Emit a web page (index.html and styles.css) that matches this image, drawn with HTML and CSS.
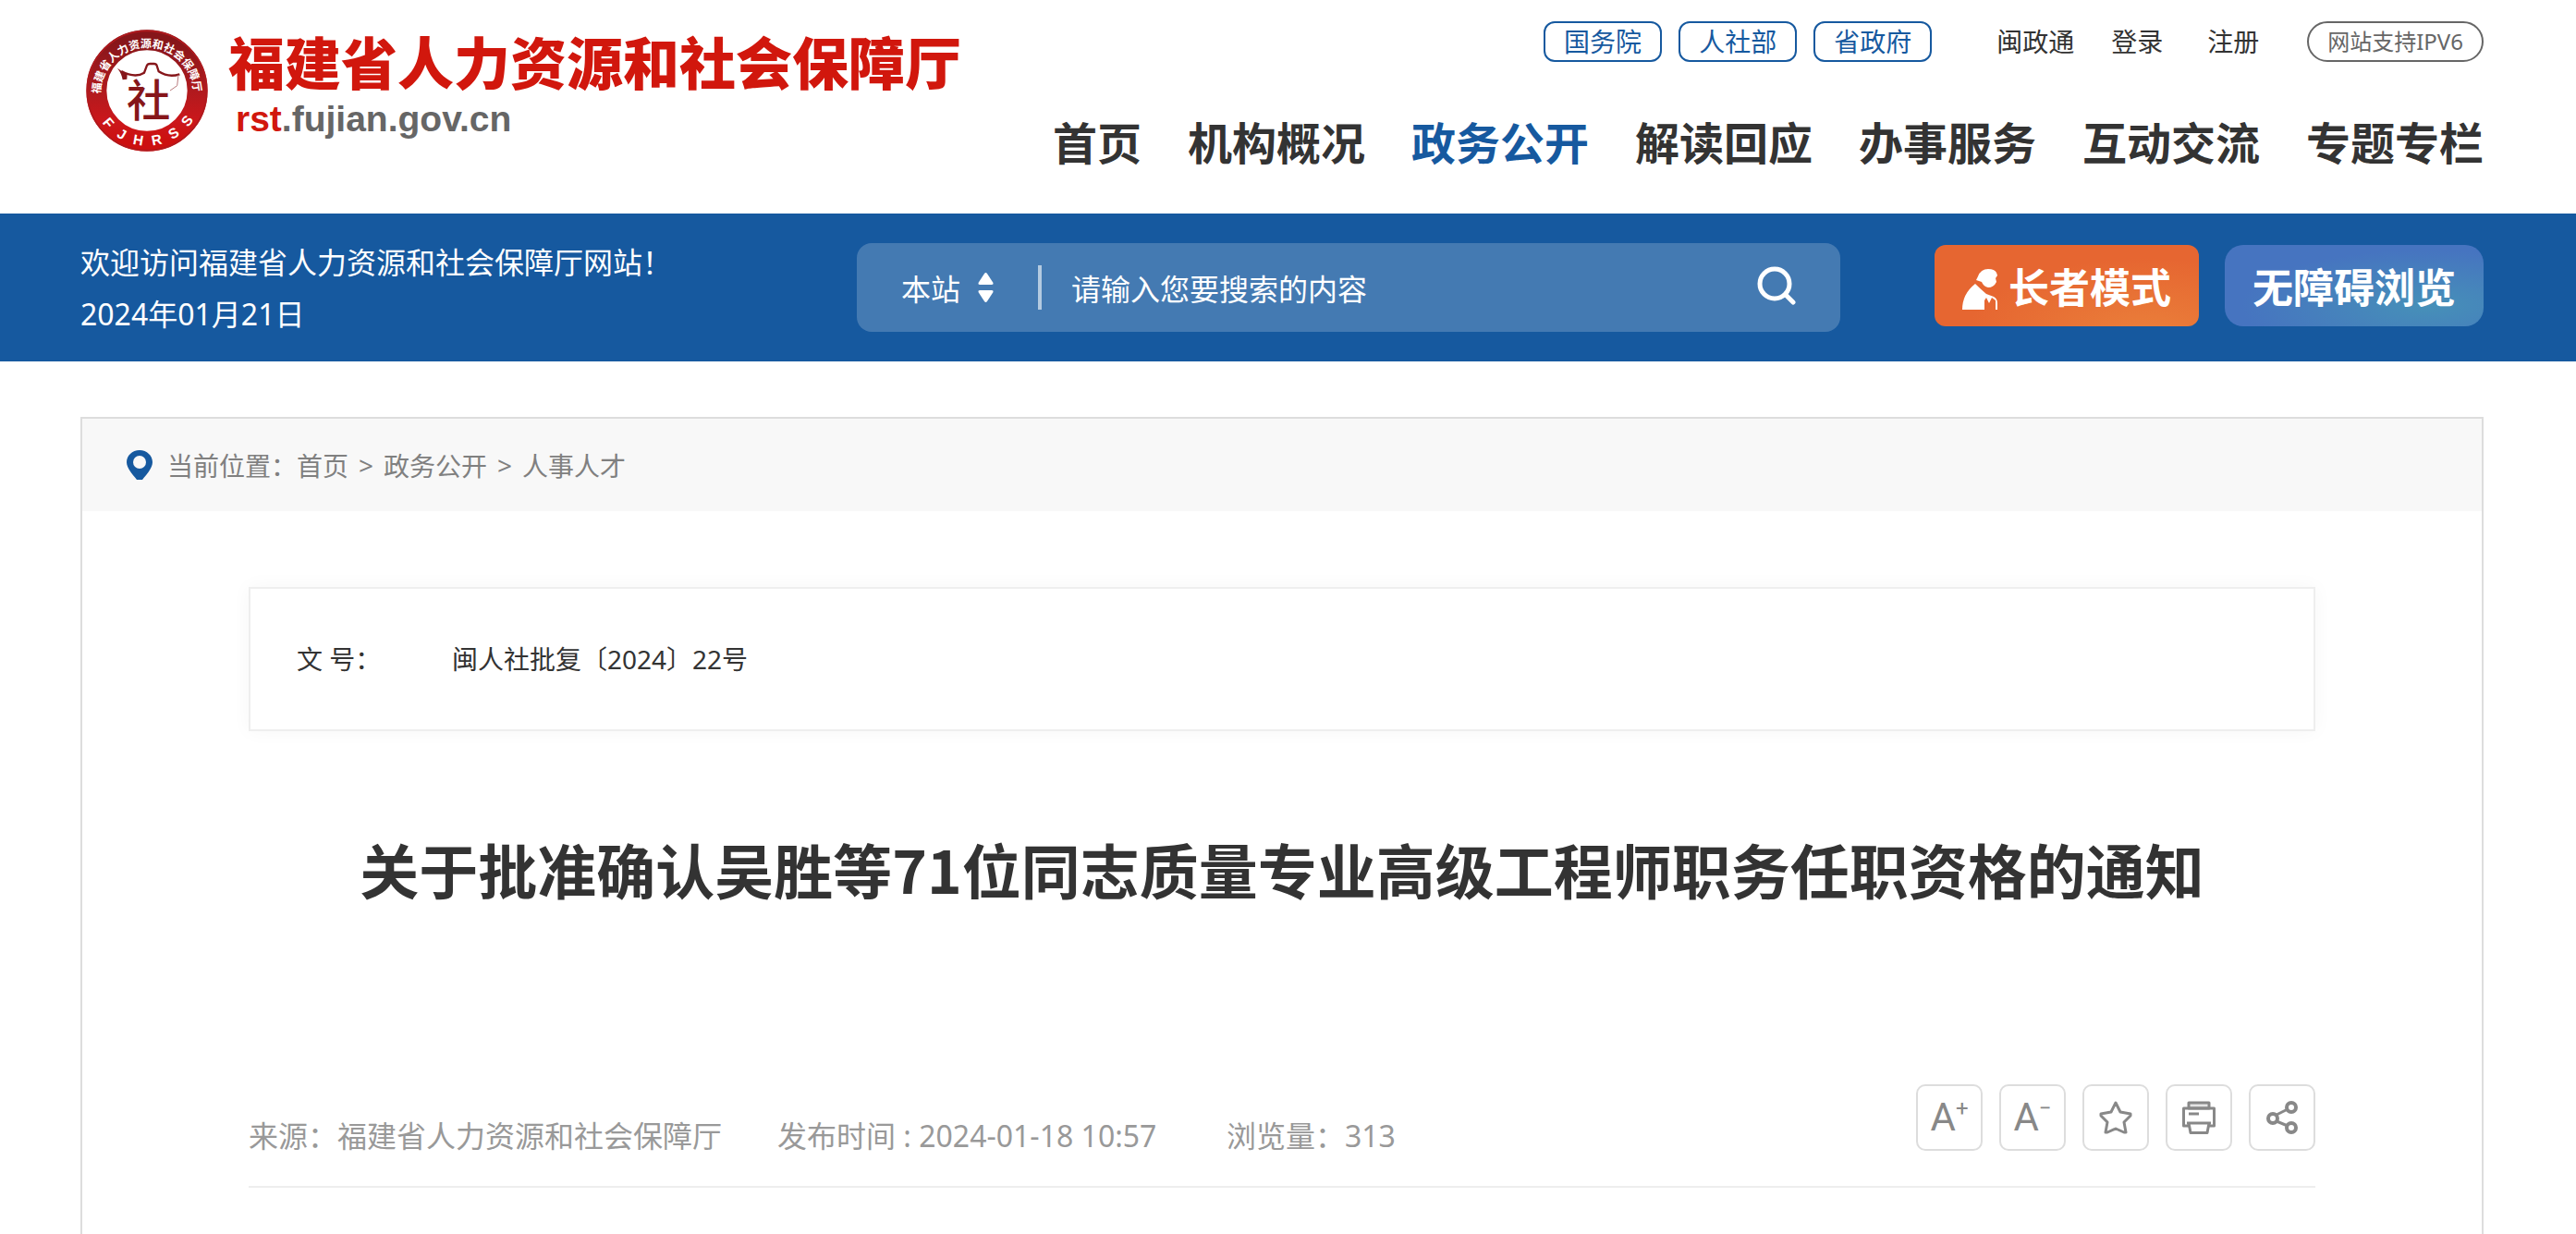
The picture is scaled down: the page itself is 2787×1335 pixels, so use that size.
FILE: index.html
```html
<!DOCTYPE html>
<html lang="zh-CN">

<head>
    <meta charset="UTF-8">
    <meta name="viewport" content="width=device-width, initial-scale=1.0">
    <title>福建省人力资源和社会保障厅</title>
    <link rel="stylesheet" href="styles.css">
</head>

<body>
    <header class="header wrap">
        <a class="logo" href="#">
            <svg class="emblem" viewBox="70 65 396 396" role="img" aria-label="FJHRSS">
                <defs>
                    <linearGradient id="ring" x1="0" y1="0" x2="0" y2="1">
                        <stop offset="0" stop-color="#86161a" />
                        <stop offset="0.5" stop-color="#b01a1e" />
                        <stop offset="0.8" stop-color="#cb171b" />
                        <stop offset="1" stop-color="#cc1010" />
                    </linearGradient>
                    <path id="arc" d="M117 274 A151 151 0 0 1 419 274" />
                </defs>
                <circle cx="268" cy="263" r="164" fill="#fff" stroke="url(#ring)" stroke-width="66" />
                <circle cx="268" cy="263" r="194" fill="none" stroke="#b01a1e" stroke-width="5" />
                <text class="ring-cn"><textPath href="#arc">福建省人力资源和社会保障厅</textPath></text>
                <g class="ring-en">
                    <text x="268" y="442" transform="rotate(50 268 263)">F</text>
                    <text x="268" y="442" transform="rotate(30 268 263)">J</text>
                    <text x="268" y="442" transform="rotate(10 268 263)">H</text>
                    <text x="268" y="442" transform="rotate(-11 268 263)">R</text>
                    <text x="268" y="442" transform="rotate(-32 268 263)">S</text>
                    <text x="268" y="442" transform="rotate(-53 268 263)">S</text>
                </g>
                <!-- roof -->
                <path d="M172 190 Q186 202 204 208 L203 226 L189 228 Q186 208 172 190Z" fill="#86161a" />
                <path d="M185 200 Q230 224 259 205 L268 181 Q271 176 278 176 L291 176 Q298 176 300 182 L306 201 Q338 222 374 210" fill="none" stroke="#86161a" stroke-width="7" />
                <path d="M370 212 L366 247 L343 263" fill="none" stroke="#b97b7d" stroke-width="3" />
                <text class="emblem-mark" x="273" y="346">社</text>
            </svg>
            <span class="logo-text">
                <span class="site-name">福建省人力资源和社会保障厅</span>
                <span class="site-domain"><b>rst</b>.fujian.gov.cn</span>
            </span>
        </a>

        <div class="header-right">
            <div class="top-links">
                <div class="pills">
                    <a class="pill" href="#">国务院</a>
                    <a class="pill" href="#">人社部</a>
                    <a class="pill" href="#">省政府</a>
                </div>
                <a class="mzt" href="#">闽政通</a>
                <div class="account">
                    <a href="#">登录</a>
                    <a href="#">注册</a>
                </div>
                <a class="pill ipv6" href="#">网站支持IPV6</a>
            </div>
            <nav class="nav">
                <a href="#">首页</a>
                <a href="#">机构概况</a>
                <a class="active" href="#">政务公开</a>
                <a href="#">解读回应</a>
                <a href="#">办事服务</a>
                <a href="#">互动交流</a>
                <a href="#">专题专栏</a>
            </nav>
        </div>
    </header>

    <div class="bar">
        <div class="bar-inner wrap">
            <div class="welcome">
                <p>欢迎访问福建省人力资源和社会保障厅网站！</p>
                <p>2024年01月21日</p>
            </div>

            <form class="search" role="search">
                <select class="scope" aria-label="搜索范围">
                    <option>本站</option>
                </select>
                <svg class="arrows" viewBox="0 0 17 34" fill="#fff" aria-hidden="true">
                    <path d="M7 2 Q8.500 0 10 2 L16.500 12 Q17 14 15 14 L2 14 Q0 14 0.500 12Z" />
                    <path d="M7 32 Q8.500 34 10 32 L16.500 22 Q17 20 15 20 L2 20 Q0 20 0.500 22Z" />
                </svg>
                <span class="divider"></span>
                <input type="text" class="keyword" aria-label="搜索内容" placeholder="请输入您要搜索的内容">
                <button class="search-btn" type="submit" aria-label="搜索">
                    <svg viewBox="0 0 42 42" fill="none" stroke="#fff" stroke-width="5" stroke-linecap="round">
                        <circle cx="19" cy="19" r="16" />
                        <path d="M31 31 L39 39" />
                    </svg>
                </button>
            </form>

            <div class="modes">
                <button class="mode elder" type="button">
                    <svg viewBox="0 0 38 44" fill="#fff" aria-hidden="true">
                        <path d="M17 8 Q20 0 28 0 Q35 0 37 4 L38 7 L36 10 L37 14 Q34 20 28 20 Q23 19 21 14 L15 12Z" />
                        <path d="M0 44 Q0 27 14 16 Q19 21 26 27 L34 30 Q38 32 38 37 L38 44 L36 44 L36 34 L32 31 L29 37 L26 31 L24 34 L24 44Z" />
                    </svg>
                    长者模式
                </button>
                <button class="mode barrier-free" type="button">无障碍浏览</button>
            </div>
        </div>
    </div>

    <div class="page wrap">
        <main class="panel">
            <div class="crumbs">
                <svg class="pin" viewBox="0 0 28 32" aria-hidden="true">
                    <path d="M14 0 C22 0 28 6 28 13 C28 20 20 28 17 32 L11 32 C8 28 0 20 0 13 C0 6 6 0 14 0Z" fill="#16599f" />
                    <circle cx="14" cy="13" r="7" fill="#f8f8f8" />
                </svg>
                <span>当前位置：</span>
                <a href="#">首页</a>
                <span class="sep">&gt;</span>
                <a href="#">政务公开</a>
                <span class="sep">&gt;</span>
                <a href="#">人事人才</a>
            </div>

            <article class="article">
                <dl class="doc-info">
                    <dt>文 号：</dt>
                    <dd>闽人社批复〔2024〕22号</dd>
                </dl>

                <h1>关于批准确认吴胜等71位同志质量专业高级工程师职务任职资格的通知</h1>

                <div class="meta">
                    <div class="meta-text">
                        <span>来源：福建省人力资源和社会保障厅</span>
                        <span>发布时间 : 2024-01-18 10:57</span>
                        <span>浏览量：313</span>
                    </div>
                    <div class="tools">
                        <button class="tool" type="button" aria-label="放大字体">A<sup>+</sup></button>
                        <button class="tool" type="button" aria-label="缩小字体">A<sup>−</sup></button>
                        <button class="tool" type="button" aria-label="收藏">
                            <svg viewBox="0 0 36 36" fill="none" stroke="#888" stroke-width="3" stroke-linejoin="round">
                                <path d="M18 2 L23 12 L34 14 L34 16 L27 23 L29 34 L27 34 L18 30 L9 34 L7 34 L9 23 L2 16 L2 14 L13 12Z" />
                            </svg>
                        </button>
                        <button class="tool" type="button" aria-label="打印">
                            <svg viewBox="0 0 36 36" fill="none" stroke="#888" stroke-width="3" stroke-linejoin="round">
                                <path d="M7 2 H29 V8 H7Z" fill="#e4e4e4" />
                                <path d="M7 27 H1.500 V8 H34.500 V27 H29" />
                                <path d="M5 24 H31 M7 14 H18" />
                                <path d="M7 24 L9 34.500 H27 L29 24" />
                            </svg>
                        </button>
                        <button class="tool" type="button" aria-label="分享">
                            <svg viewBox="0 0 36 36" fill="none" stroke="#888" stroke-width="4">
                                <circle cx="8" cy="19" r="5" />
                                <circle cx="28" cy="7" r="5" />
                                <circle cx="28" cy="29" r="5" />
                                <path d="M12 15 L24 9 M12 22 L24 27" stroke-width="3" />
                            </svg>
                        </button>
                    </div>
                </div>
            </article>
        </main>
    </div>
</body>

</html>
```
FILE: styles.css
```css
* {
    box-sizing: border-box;
}

body {
    margin: 0;
    min-height: 100vh;
    display: flex;
    flex-direction: column;
    font-family: "Noto Sans", "Noto Sans CJK SC", sans-serif;
    font-size: 28px;
    color: #333;
    background: #fff;
}

a {
    color: inherit;
    text-decoration: none;
}

button,
input,
select {
    font: inherit;
    color: inherit;
    border: none;
    background: none;
    padding: 0;
    margin: 0;
}

button {
    cursor: pointer;
}

.wrap {
    padding-left: 87px;
    padding-right: 100px;
}

/* header */
.header {
    display: flex;
    justify-content: space-between;
    min-height: 231px;
}

.logo {
    display: flex;
    gap: 22px;
    padding: 32px 0 0 6px;
}

.emblem {
    width: 132px;
    height: 132px;
}

.ring-cn {
    font-family: "Noto Sans CJK SC", sans-serif;
    font-size: 36px;
    font-weight: bold;
    fill: #fff;
}

.ring-en {
    font-family: "Liberation Sans", sans-serif;
    font-size: 46px;
    font-weight: bold;
    text-anchor: middle;
    fill: #fff;
}

.emblem-mark {
    font-family: "Noto Sans CJK SC", sans-serif;
    font-size: 142px;
    font-weight: 500;
    text-anchor: middle;
    fill: #86161a;
}

.logo-text {
    display: flex;
    flex-direction: column;
    padding-top: 5px;
}

.site-name {
    font-size: 61px;
    line-height: 64px;
    font-weight: 900;
    color: #d1170d;
}

.site-domain {
    margin-top: 6px;
    padding-left: 8px;
    font-family: "Liberation Sans", sans-serif;
    font-size: 39px;
    line-height: 44px;
    font-weight: bold;
    color: #666;
}

.site-domain b {
    color: #d1170d;
}

.header-right {
    display: flex;
    flex-direction: column;
    align-items: flex-end;
    padding-top: 23px;
}

.top-links {
    display: flex;
    align-items: center;
    line-height: 40px;
}

.pills {
    display: flex;
    gap: 18px;
}

.pill {
    padding: 0 20px;
    border: 2px solid #16599f;
    border-radius: 12px;
    color: #16599f;
}

.mzt {
    margin: 0 40px 0 70px;
}

.account {
    display: flex;
    gap: 48px;
}

.ipv6 {
    margin-left: 52px;
    border-color: #666;
    border-radius: 22px;
    font-size: 24px;
    color: #666;
}

.nav {
    display: flex;
    gap: 50px;
    margin-top: 56px;
    font-size: 48px;
    line-height: 64px;
    font-weight: bold;
}

.nav .active {
    color: #16599f;
}

/* blue bar */
.bar {
    background: #16599f;
    color: #fff;
    font-size: 32px;
}

.bar-inner {
    display: flex;
    align-items: center;
    height: 160px;
}

.welcome {
    flex: 0 1 840px;
    padding-top: 2px;
}

.welcome p {
    margin: 0;
    line-height: 56px;
}

.search {
    flex: 1;
    display: flex;
    align-items: center;
    height: 96px;
    padding: 0 48px;
    border-radius: 16px;
    background: rgba(255, 255, 255, 0.2);
}

.scope {
    appearance: none;
    width: 64px;
    padding-top: 2px;
    outline: none;
}

.scope option {
    color: #333;
}

.arrows {
    width: 17px;
    height: 34px;
    margin-left: 19px;
}

.divider {
    width: 4px;
    height: 48px;
    margin: 0 32px 0 48px;
    background: rgba(255, 255, 255, 0.6);
}

.keyword {
    flex: 1;
    min-width: 0;
    height: 96px;
    padding-top: 2px;
    outline: none;
}

.keyword::placeholder {
    color: #fff;
    opacity: 1;
}

.search-btn {
    margin-bottom: 4px;
}

.search-btn,
.search-btn svg {
    display: block;
    width: 42px;
    height: 42px;
}

.modes {
    display: flex;
    gap: 28px;
    margin-left: 102px;
    margin-bottom: 4px;
}

.mode {
    display: flex;
    align-items: center;
    justify-content: center;
    gap: 12px;
    height: 88px;
    padding: 0 30px;
    font-size: 44px;
    font-weight: bold;
    white-space: nowrap;
}

.mode svg {
    width: 38px;
    height: 44px;
    margin-top: 8px;
}

.elder {
    border-radius: 12px;
    background: radial-gradient(ellipse at 80% 110%, #ea7f3a, #e66631 60%);
}

.barrier-free {
    border-radius: 20px;
    background: radial-gradient(ellipse at 78% 75%, #4690b8, #4674c0 65%);
}

/* content */
.page {
    flex: 1;
    display: flex;
    padding-top: 60px;
}

.panel {
    flex: 1;
    border: 2px solid #ddd;
    border-bottom: none;
}

.crumbs {
    display: flex;
    align-items: center;
    height: 100px;
    padding-left: 48px;
    background: #f8f8f8;
    color: #808080;
}

.pin {
    width: 28px;
    height: 32px;
    margin-right: 16px;
}

.sep {
    margin: 0 11px;
}

.article {
    padding: 82px 180px 0;
}

.doc-info {
    display: flex;
    margin: 0;
    padding: 56px 50px;
    border: 2px solid #eee;
    box-shadow: 0 0 20px rgba(0, 0, 0, 0.04);
    line-height: 40px;
}

.doc-info dt {
    width: 168px;
}

.doc-info dd {
    margin: 0;
}

h1 {
    margin: 108px 0 0;
    font-family: "Noto Sans CJK SC", sans-serif;
    font-size: 64px;
    line-height: 80px;
    text-align: center;
}

.meta {
    display: flex;
    justify-content: space-between;
    align-items: flex-end;
    margin-top: 194px;
    padding-bottom: 38px;
    border-bottom: 2px solid #eee;
}

.meta-text {
    display: grid;
    grid-template-columns: 572px 486px auto;
    font-size: 32px;
    line-height: 32px;
    color: #999;
}

.tools {
    display: flex;
    gap: 18px;
}

.tool {
    display: flex;
    align-items: center;
    justify-content: center;
    width: 72px;
    height: 72px;
    border: 2px solid #ddd;
    border-radius: 10px;
    font-family: Roboto, sans-serif;
    font-size: 42px;
    line-height: 48px;
    color: #888;
}

.tool sup {
    align-self: flex-start;
    font-size: 24px;
    line-height: 48px;
}

.tool svg {
    width: 36px;
    height: 36px;
}
```
